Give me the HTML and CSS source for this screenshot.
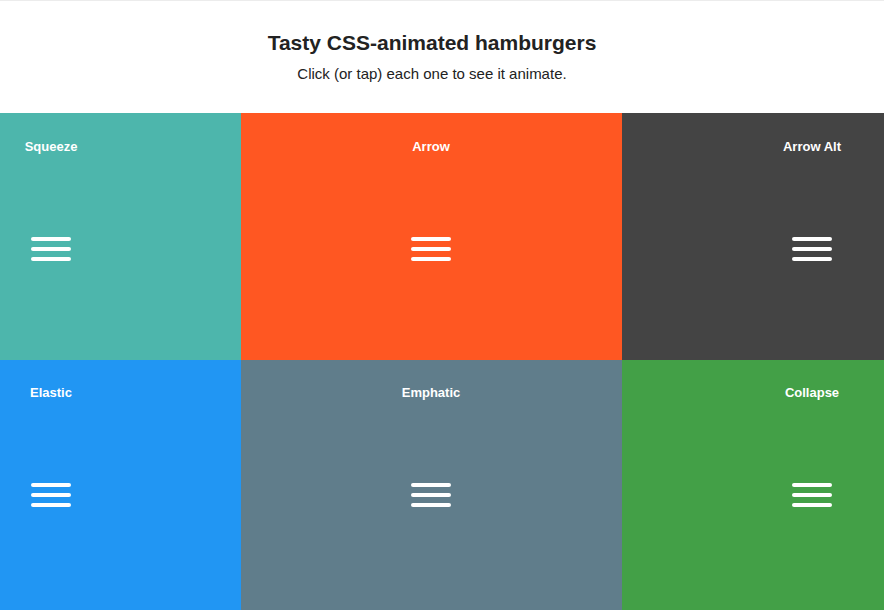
FILE: index.html
```html
<!DOCTYPE html>
<html lang="en">
<head>
<meta charset="utf-8">
<title>Tasty CSS-animated hamburgers</title>
<link rel="stylesheet" href="styles.css">
</head>
<body>
<header class="intro">
  <h1 class="intro-title">Tasty CSS-animated hamburgers</h1>
  <p class="intro-text">Click (or tap) each one to see it animate.</p>
</header>
<main class="grid">
  <section class="cell cell-left teal">
    <div class="inner"><h2 class="label">Squeeze</h2><button class="burger" aria-label="Menu"><span></span><span></span><span></span></button></div>
  </section>
  <section class="cell orange">
    <div class="inner"><h2 class="label">Arrow</h2><button class="burger" aria-label="Menu"><span></span><span></span><span></span></button></div>
  </section>
  <section class="cell dark">
    <div class="inner"><h2 class="label">Arrow Alt</h2><button class="burger" aria-label="Menu"><span></span><span></span><span></span></button></div>
  </section>
  <section class="cell cell-left blue row2">
    <div class="inner"><h2 class="label">Elastic</h2><button class="burger" aria-label="Menu"><span></span><span></span><span></span></button></div>
  </section>
  <section class="cell slate row2">
    <div class="inner"><h2 class="label">Emphatic</h2><button class="burger" aria-label="Menu"><span></span><span></span><span></span></button></div>
  </section>
  <section class="cell green row2">
    <div class="inner"><h2 class="label">Collapse</h2><button class="burger" aria-label="Menu"><span></span><span></span><span></span></button></div>
  </section>
</main>
</body>
</html>
```

FILE: styles.css
```css
html, body {
  margin: 0;
  padding: 0;
}
body {
  font-family: "Liberation Sans", Arial, sans-serif;
  color: #222;
  background: #fff;
  border-top: 1px solid #ececec;
}
.intro {
  height: 112px;
  box-sizing: border-box;
  padding: 30px 20px 0 0;
  text-align: center;
}
.intro-title {
  margin: 0;
  font-size: 21px;
  line-height: 24px;
  font-weight: bold;
  color: #222;
}
.intro-text {
  margin: 10px 0 0;
  font-size: 15px;
  line-height: 18px;
  color: #222;
}
.grid {
  display: grid;
  grid-template-columns: 241px 381px 262px;
  grid-template-rows: 247px 250px;
}
.cell {
  overflow: hidden;
  display: flex;
  justify-content: flex-start;
}
.cell-left { justify-content: flex-end; }
.inner {
  flex: 0 0 380px;
  width: 380px;
  display: flex;
  flex-direction: column;
  align-items: center;
  padding-top: 26px;
}
.row2 .inner { padding-top: 25px; }
.label {
  margin: 0;
  font-size: 13px;
  line-height: 16px;
  font-weight: bold;
  color: #fff;
}
.burger {
  margin-top: 82px;
  width: 40px;
  height: 24px;
  padding: 0;
  border: 0;
  background: none;
  display: flex;
  flex-direction: column;
  justify-content: space-between;
  cursor: pointer;
}
.burger span {
  display: block;
  width: 40px;
  height: 4px;
  border-radius: 4px;
  background: #fff;
}
.teal { background: #4db6ac; }
.orange { background: #ff5722; }
.dark { background: #444444; }
.blue { background: #2196f3; }
.slate { background: #607d8b; }
.green { background: #43a047; }
```
